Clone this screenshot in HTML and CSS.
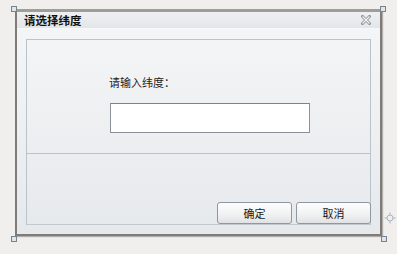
FILE: index.html
```html
<!DOCTYPE html>
<html lang="zh">
<head>
<meta charset="utf-8">
<link rel="stylesheet" href="styles.css">
</head>
<body>
<div class="canvas">
  <div class="dialog">
    <div class="titlebar">
      <span class="title">请选择纬度</span>
      <svg class="close" width="10" height="10" viewBox="0 0 10 10">
        <path d="M1.5 1.5 L8.5 8.5 M8.5 1.5 L1.5 8.5" stroke="#8e9296" stroke-width="3" stroke-linecap="square" fill="none"/>
        <path d="M1.5 1.5 L8.5 8.5 M8.5 1.5 L1.5 8.5" stroke="#f4f5f6" stroke-width="1.2" fill="none"/>
      </svg>
    </div>
    <div class="body">
      <div class="panel">
        <div class="upper">
          <div class="label">请输入纬度：</div>
          <div class="input"></div>
        </div>
        <div class="lower">
          <div class="btn">确定</div>
          <div class="btn">取消</div>
        </div>
      </div>
    </div>
  </div>
  <span class="handle h-tl"></span>
  <span class="handle h-tr"></span>
  <span class="handle h-bl"></span>
  <span class="handle h-br"></span>
  <svg class="cross" width="12" height="12" viewBox="0 0 12 12">
    <circle cx="6" cy="6" r="3" fill="none" stroke="#a9b4bf" stroke-width="1"/>
    <path d="M6 0.5 V3 M6 9 V11.5 M0.5 6 H3 M9 6 H11.5" stroke="#a9b4bf" stroke-width="1"/>
  </svg>
</div>
</body>
</html>
```
FILE: styles.css
```css
html, body {
  margin: 0;
  padding: 0;
}
body {
  background: #f0efee;
  width: 397px;
  height: 254px;
  overflow: hidden;
  font-family: "Noto Sans CJK SC", "Liberation Sans", sans-serif;
  color: #1a1a1a;
}
.canvas {
  position: relative;
  width: 397px;
  height: 254px;
  padding: 9px 0 0 15px;
  box-sizing: border-box;
}
.dialog {
  width: 367px;
  height: 227px;
  box-sizing: border-box;
  border: 2px solid #7e7b78;
  border-top: 3px solid #a19d98;
  box-shadow: 1px 1px 1px rgba(60, 55, 50, 0.35);
  background: linear-gradient(#f5f6f7, #e6e9ec);
  display: flex;
  flex-direction: column;
}
.titlebar {
  height: 16px;
  flex: none;
  display: flex;
  align-items: center;
  justify-content: space-between;
  padding: 0 9px 0 7px;
  background: linear-gradient(#eff0f1, #e3e6e9);
  border-bottom: 1px solid #f7f8f9;
}
.title {
  font-size: 11.5px;
  font-weight: bold;
  line-height: 14px;
  color: #111;
}
.close {
  display: block;
}
.body {
  flex: 1;
  display: flex;
  padding: 10px 9px 9px 9px;
}
.panel {
  flex: 1;
  border: 1px solid #b9c3cc;
  border-bottom-color: #c3c9ce;
  display: flex;
  flex-direction: column;
}
.upper {
  height: 114px;
  flex: none;
  border-bottom: 1px solid #b9c3cc;
  padding: 35px 0 0 82px;
  box-sizing: border-box;
}
.label {
  font-size: 11px;
  line-height: 14px;
  color: #222;
}
.input {
  margin-top: 14px;
  margin-left: 1px;
  width: 198px;
  height: 28px;
  background: #fff;
  border: 1px solid #8a9199;
  border-top-color: #7c838a;
}
.lower {
  flex: 1;
  display: flex;
  justify-content: flex-end;
  align-items: flex-end;
  gap: 4px;
  margin-right: -1px;
}
.btn {
  width: 73px;
  height: 20px;
  box-sizing: content-box;
  border: 1px solid #8f979f;
  border-radius: 3px;
  background: linear-gradient(#fdfdfd, #f1f2f3 55%, #dfe2e5);
  font-size: 11px;
  line-height: 20px;
  text-align: center;
  color: #1a1a1a;
}
.handle {
  position: absolute;
  width: 4px;
  height: 4px;
  border: 1px solid #76848f;
  background: #dfe5eb;
}
.h-tl { left: 11px; top: 6px; }
.h-tr { left: 380px; top: 6px; }
.h-bl { left: 11px; top: 236px; }
.h-br { left: 381px; top: 236px; }
.cross {
  position: absolute;
  left: 384px;
  top: 212px;
}
```
